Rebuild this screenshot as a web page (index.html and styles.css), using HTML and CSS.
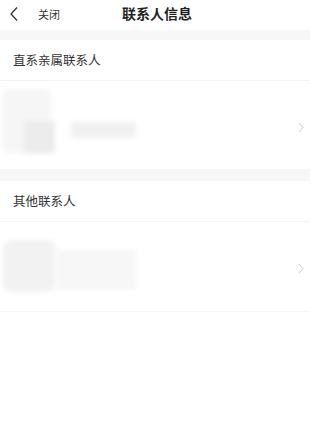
FILE: index.html
```html
<!DOCTYPE html>
<html lang="zh">
<head>
<meta charset="utf-8">
<link rel="stylesheet" href="styles.css">
</head>
<body>
<div class="header">
  <div class="left">
    <svg class="back" width="10" height="16" viewBox="0 0 10 16"><path d="M8 1.5 L2 8 L8 14.5" fill="none" stroke="#333" stroke-width="1.3"/></svg>
    <span class="close">关闭</span>
  </div>
  <div class="title">联系人信息</div>
</div>
<div class="band"></div>
<div class="section-title">直系亲属联系人</div>
<div class="row row1">
  <div class="blur b1a"></div>
  <div class="blur b1b"></div>
  <div class="blur b1c"></div>
  <svg class="chev" width="6" height="11" viewBox="0 0 6 11"><path d="M1 1 L5 5.5 L1 10" fill="none" stroke="#c8c8c8" stroke-width="1"/></svg>
</div>
<div class="band band2"></div>
<div class="section-title">其他联系人</div>
<div class="row row2">
  <div class="blur b2a"></div>
  <div class="blur b2b"></div>
  <svg class="chev" width="6" height="11" viewBox="0 0 6 11"><path d="M1 1 L5 5.5 L1 10" fill="none" stroke="#c8c8c8" stroke-width="1"/></svg>
</div>
</body>
</html>
```
FILE: styles.css
```css
html, body { margin: 0; padding: 0; background: #fff; }
body { font-family: "Noto Sans CJK SC", "Noto Sans", sans-serif; color: #333; width: 310px; overflow: hidden; }
.header { position: relative; height: 30px; display: flex; align-items: center; }
.left { display: flex; align-items: center; padding-left: 9px; gap: 19px; }
.back { display: block; margin-top: -3px; }
.close { font-size: 11px; color: #333; line-height: 1; margin-top: -1px; }
.title { position: absolute; left: 0; right: 0; top: 0; height: 30px; line-height: 26px; text-align: center; font-size: 14px; font-weight: 700; color: #222; padding-left: 4px; }
.band { height: 10px; background: #f7f7f7; }
.band2 { height: 12px; }
.section-title { height: 40px; line-height: 40px; padding-left: 13px; font-size: 12.5px; color: #333; border-bottom: 1px solid #f4f4f4; }
.row { position: relative; display: flex; align-items: center; justify-content: flex-end; padding-right: 6px; }
.row1 { height: 88px; }
.row2 { height: 89px; border-bottom: 1px solid #f7f7f7; }
.chev { display: block; }
.row1 .chev { margin-top: 4px; }
.row2 .chev { margin-top: 3px; }
.blur { position: absolute; filter: blur(2px); }
.b1a { left: 3px; top: 8px; width: 48px; height: 64px; background: #f6f6f6; border-radius: 6px; }
.b1b { left: 24px; top: 40px; width: 31px; height: 32px; background: #ececec; }
.b1c { left: 71px; top: 41px; width: 65px; height: 16px; background: #f1f1f1; }
.b2a { left: 3px; top: 18px; width: 52px; height: 52px; background: #f2f2f2; border-radius: 8px; }
.b2b { left: 55px; top: 28px; width: 81px; height: 40px; background: #f7f7f7; }
```
